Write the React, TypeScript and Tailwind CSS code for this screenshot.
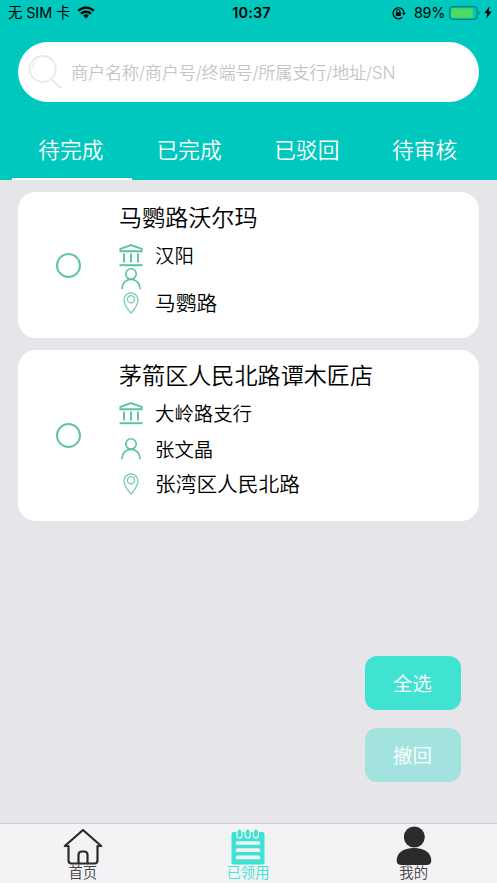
import React from 'react';

const BankIcon = () => (
  <svg className="-mt-px" width="24" height="24" viewBox="0 0 24 24" fill="none" stroke="#5cc39f">
    <path d="M1.400 8.200V5.900L12 2.100l10.600 3.800v2.300z" strokeWidth="1.900" />
    <path d="M5 10.500v9M12 10.500v9M19 10.500v9" strokeWidth="1.900" />
    <path d="M.5 22.200h23" strokeWidth="2" />
  </svg>
);

const PersonIcon = () => (
  <svg className="-mt-px" width="24" height="24" viewBox="0 0 24 24" fill="none" stroke="#5cc39f" strokeWidth="1.650">
    <circle cx="12" cy="6.900" r="5.200" />
    <path d="M3 22.300v-1a9 9 0 0 1 18 0v1" />
  </svg>
);

const PinIcon = () => (
  <svg className="-mt-px" width="24" height="24" viewBox="0 0 24 24" fill="none" stroke="#74cbad" strokeWidth="1.250">
    <path d="M12 22.2C9.6 19.4 5 13.2 5 9a7 7.1 0 0 1 14 0c0 4.200-4.600 10.400-7 13.200z" />
    <circle cx="12" cy="8.300" r="3.600" />
  </svg>
);

type Row = { icon: React.ReactNode; text: string; row: string; font: string };

const cards: { title: string; height: string; rows: Row[] }[] = [
  {
    title: '马鹦路沃尔玛',
    height: 'h-[146px]',
    rows: [
      { icon: <BankIcon />, text: '汉阳', row: 'h-6', font: 'text-[19.4px]' },
      { icon: <PersonIcon />, text: '', row: 'h-6', font: 'text-[19.4px]' },
      { icon: <PinIcon />, text: '马鹦路', row: 'h-6', font: 'text-[20.7px]' },
    ],
  },
  {
    title: '茅箭区人民北路谭木匠店',
    height: 'h-[171px]',
    rows: [
      { icon: <BankIcon />, text: '大岭路支行', row: 'h-9', font: 'text-[19.4px]' },
      { icon: <PersonIcon />, text: '张文晶', row: 'h-[35px]', font: 'text-[19.4px]' },
      { icon: <PinIcon />, text: '张湾区人民北路', row: 'h-9', font: 'text-[20.7px]' },
    ],
  },
];

const tabs = ['待完成', '已完成', '已驳回', '待审核'];

function StatusBar() {
  return (
    <div className="grid h-[26px] grid-cols-[1fr_auto_1fr] items-center pl-2 pr-[5px] text-[14.4px] leading-none text-black">
      <div className="flex items-center gap-[7px]">
        <span className="pt-px tracking-[-0.1px]">无 SIM 卡</span>
        <svg className="-mt-[2px]" width="18" height="13" viewBox="0 0 18 13" fill="none" stroke="#000" strokeWidth="2.300">
          <path d="M1.200 4.900a11 11 0 0 1 15.600 0M4 7.800a7.100 7.100 0 0 1 10 0" />
          <path d="M9 12.600l-2.800-2.900a4 4 0 0 1 5.600 0z" fill="#000" stroke="none" />
        </svg>
      </div>
      <span className="pl-[3px] text-[14.4px] font-semibold tracking-[0.200px]">10:37</span>
      <div className="flex items-center justify-end">
        <svg className="mr-[8px] -mt-px" width="14" height="14" viewBox="0 0 14 14" fill="none" stroke="#000">
          <path d="M10.300 11.300A5.500 5.500 0 1 1 12 6.500" strokeWidth="1.200" />
          <path d="M9.700 6.700h4.300l-2.100 2.600z" fill="#000" stroke="none" />
          <rect x="3.900" y="6.200" width="5" height="3.700" rx=".5" fill="#000" stroke="none" />
          <path d="M4.900 6.300V5a1.500 1.500 0 0 1 3 0v1.300" strokeWidth="1" />
        </svg>
        <span className="mr-[4px] text-[14.4px] tracking-[-0.300px]">89%</span>
        <svg className="mr-[3px] -mt-px" width="32" height="14" viewBox="0 0 32 14">
          <rect x=".7" y=".7" width="27.300" height="12.600" rx="3" fill="none" stroke="#007f7a" strokeWidth="1.200" />
          <rect x="2.200" y="2.200" width="21.600" height="9.600" rx="1.500" fill="#4cd964" />
          <path d="M29.400 4.800c1.800.7 1.800 3.700 0 4.400z" fill="#007f7a" />
        </svg>
        <svg className="-mt-px" width="8" height="13" viewBox="0 0 8 13">
          <path d="M5.500.3L.3 7.200h3L2.300 12.700 7.700 5.600H4.600z" />
        </svg>
      </div>
    </div>
  );
}

export default function App() {
  return (
    <div className="relative flex h-[883px] w-[497px] flex-col overflow-hidden bg-[#e5e5ea] font-['Inter','Noto_Sans_CJK_SC',sans-serif] text-black">
      <header className="flex h-[180px] flex-col bg-[#00c8be]">
        <StatusBar />
        <div className="mx-[18px] mt-4 flex h-[60px] items-center rounded-full bg-white pl-[10px] pr-4">
          <svg width="36" height="36" viewBox="0 0 36 36" fill="none" stroke="#e9e9e9">
            <circle cx="14.700" cy="15" r="13" strokeWidth="1.800" />
            <path d="M23.500 25.500l9.500 8.500" strokeWidth="2.200" />
            <path d="M4.700 14c.3-3 1-4.400 2.500-6" strokeWidth="1.500" />
          </svg>
          <span className="ml-[7px] whitespace-nowrap pt-px text-[17.2px] font-[350] leading-none tracking-[-0.200px] text-[#c4c4c6]">
            商户名称/商户号/终端号/所属支行/地址/SN
          </span>
        </div>
        <nav className="flex flex-1 px-3 text-[21.700px] font-[350] text-white">
          {tabs.map((t, i) => (
            <div
              key={t}
              className={
                i === 0
                  ? 'flex w-[120px] items-center justify-center border-b-2 border-white pt-[21px] pr-[2px]'
                  : 'flex w-[118px] items-center justify-center border-b-2 border-transparent pt-[21px] pr-[3px]'
              }
            >
              {t}
            </div>
          ))}
        </nav>
      </header>

      <main className="flex flex-1 flex-col gap-3 px-[18px] pt-3">
        {cards.map((c) => (
          <section key={c.title} className={`flex rounded-[18px] bg-white ${c.height}`}>
            <div className="flex w-[101px] items-center justify-center">
              <span className="h-[25px] w-[25px] rounded-full border-2 border-[#5fc4a1]" />
            </div>
            <div className="flex flex-col font-[350]">
              <h2 className="h-[52px] whitespace-nowrap text-[23.100px] leading-[53px]">{c.title}</h2>
              {c.rows.map((r, i) => (
                <div key={i} className={`flex items-start gap-[12px] ${r.row}`}>
                  {r.icon}
                  <span className={`whitespace-nowrap leading-[24px] ${r.font}`}>{r.text}</span>
                </div>
              ))}
            </div>
          </section>
        ))}
      </main>

      <div className="absolute right-9 top-[656px] flex flex-col gap-[18px] text-[19.400px] font-[350] text-white">
        <button className="h-[54px] w-24 rounded-xl bg-[#40e2d2] pr-px pt-[3px]">全选</button>
        <button className="h-[54px] w-24 rounded-xl bg-[#a3e3df] pr-px pt-[3px]">撤回</button>
      </div>

      <footer className="grid h-[60px] grid-cols-3 border-t border-[#cdcdd2] bg-[#f3f3f5] text-[14.400px] font-[350] leading-[15px] text-[#444]">
        <div className="flex flex-col items-center pt-1">
          <svg width="40" height="37" viewBox="0 0 40 37" fill="none" stroke="#2b2b2b" strokeWidth="2.200" strokeLinecap="round" strokeLinejoin="round">
            <path d="M1.800 18L20 2l18.200 16M1.800 18h3.700v14.500q0 3 3 3h23q3 0 3-3V18h3.700" />
            <path d="M15.500 35.300v-8.300q0-3.500 3.500-3.500h2q3.500 0 3.500 3.500v8.300" />
          </svg>
          <span>首页</span>
        </div>
        <div className="flex flex-col items-center pt-1 text-[#40e2d2]">
          <svg width="34" height="37" viewBox="0 0 34 37">
            <rect x=".5" y="4" width="33" height="32.500" rx="2" fill="#40e2d2" />
            {[8.5, 16.700, 24.900].map((x) => (
              <rect key={x} x={x - 2.500} y="1" width="5" height="9" rx="2.500" fill="#40e2d2" stroke="#f3f3f5" strokeWidth="1.200" />
            ))}
            <path d="M6.500 15h21M6.500 22.200h21M6.500 29.400h21" stroke="#f3f3f5" strokeWidth="3.700" strokeLinecap="round" />
          </svg>
          <span className="pr-px">已领用</span>
        </div>
        <div className="flex flex-col items-center pt-[2px]">
          <svg width="36" height="39" viewBox="0 0 36 39" fill="#2b2b2b">
            <circle cx="18.300" cy="11" r="10.500" />
            <path d="M.7 34.500C.7 27 7 22 18 22s17.300 5 17.300 12.500q0 4.500-5 4.500H5.700q-5 0-5-4.500z" />
          </svg>
          <span className="pr-px">我的</span>
        </div>
      </footer>
    </div>
  );
}
